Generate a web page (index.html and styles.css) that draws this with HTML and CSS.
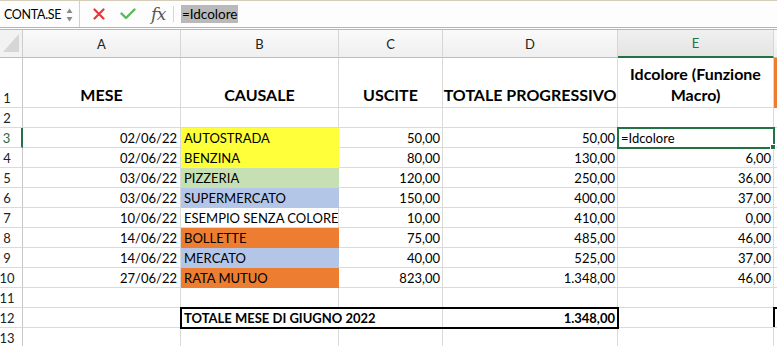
FILE: index.html
```html
<!DOCTYPE html>
<html lang="it">
  <head>
    <meta charset="UTF-8" />
    <title>Spese giugno 2022</title>
    <link rel="stylesheet" href="styles.css">
  </head>
  <body>
    <header class="formula-bar">
      <div class="name-box">
        <span>CONTA.SE</span>
        <svg class="spinner" width="7" height="16" viewBox="0 0 7 16">
          <path d="M3.5 1.5 L6.5 6 L0.5 6 Z" fill="#8a8a8a" />
          <path d="M3.5 14.5 L6.5 10 L0.5 10 Z" fill="#8a8a8a" />
        </svg>
      </div>
      <div class="tools">
        <svg class="icon-cancel" width="12" height="12" viewBox="0 0 12 12">
          <path d="M1.5 1.5 L10.5 10.5 M10.5 1.5 L1.5 10.5" stroke="#e2393d" stroke-width="2.2" stroke-linecap="round" />
        </svg>
        <svg class="icon-ok" width="16" height="12" viewBox="0 0 16 12">
          <path d="M1.5 5.5 L6 10 L14.5 1.5" fill="none" stroke="#5cb85c" stroke-width="2.4" stroke-linecap="round" stroke-linejoin="round" />
        </svg>
        <span class="fx">fx</span>
        <span class="divider"></span>
      </div>
      <div class="formula">
        <span class="formula-text">=Idcolore</span>
      </div>
    </header>

    <main class="sheet">
      <div class="corner"></div>
      <div class="ch">A</div>
      <div class="ch">B</div>
      <div class="ch">C</div>
      <div class="ch">D</div>
      <div class="ch active">E</div>
      <div class="ch"></div>

      <div class="cell rh">1</div>
      <div class="cell head">MESE</div>
      <div class="cell head">CAUSALE</div>
      <div class="cell head">USCITE</div>
      <div class="cell head">TOTALE PROGRESSIVO</div>
      <div class="cell head wrap">Idcolore (Funzione Macro)</div>
      <div class="cell fill-orange"></div>

      <div class="cell rh">2</div>
      <div class="cell"></div>
      <div class="cell"></div>
      <div class="cell"></div>
      <div class="cell"></div>
      <div class="cell"></div>
      <div class="cell"></div>

      <div class="cell rh current">3</div>
      <div class="cell num date">02/06/22</div>
      <div class="cell fill-yellow">AUTOSTRADA</div>
      <div class="cell num">50,00</div>
      <div class="cell num">50,00</div>
      <div class="cell selected">=Idcolore</div>
      <div class="cell"></div>

      <div class="cell rh">4</div>
      <div class="cell num date">02/06/22</div>
      <div class="cell fill-yellow">BENZINA</div>
      <div class="cell num">80,00</div>
      <div class="cell num">130,00</div>
      <div class="cell num">6,00</div>
      <div class="cell"></div>

      <div class="cell rh">5</div>
      <div class="cell num date">03/06/22</div>
      <div class="cell fill-green">PIZZERIA</div>
      <div class="cell num">120,00</div>
      <div class="cell num">250,00</div>
      <div class="cell num">36,00</div>
      <div class="cell"></div>

      <div class="cell rh">6</div>
      <div class="cell num date">03/06/22</div>
      <div class="cell fill-blue">SUPERMERCATO</div>
      <div class="cell num">150,00</div>
      <div class="cell num">400,00</div>
      <div class="cell num">37,00</div>
      <div class="cell"></div>

      <div class="cell rh">7</div>
      <div class="cell num date">10/06/22</div>
      <div class="cell">ESEMPIO SENZA COLORE</div>
      <div class="cell num">10,00</div>
      <div class="cell num">410,00</div>
      <div class="cell num">0,00</div>
      <div class="cell"></div>

      <div class="cell rh">8</div>
      <div class="cell num date">14/06/22</div>
      <div class="cell fill-orange">BOLLETTE</div>
      <div class="cell num">75,00</div>
      <div class="cell num">485,00</div>
      <div class="cell num">46,00</div>
      <div class="cell"></div>

      <div class="cell rh">9</div>
      <div class="cell num date">14/06/22</div>
      <div class="cell fill-blue">MERCATO</div>
      <div class="cell num">40,00</div>
      <div class="cell num">525,00</div>
      <div class="cell num">37,00</div>
      <div class="cell"></div>

      <div class="cell rh">10</div>
      <div class="cell num date">27/06/22</div>
      <div class="cell fill-orange">RATA MUTUO</div>
      <div class="cell num">823,00</div>
      <div class="cell num">1.348,00</div>
      <div class="cell num">46,00</div>
      <div class="cell"></div>

      <div class="cell rh">11</div>
      <div class="cell"></div>
      <div class="cell"></div>
      <div class="cell"></div>
      <div class="cell"></div>
      <div class="cell"></div>
      <div class="cell"></div>

      <div class="cell rh">12</div>
      <div class="cell"></div>
      <div class="total">
        <div class="cell total-label">TOTALE MESE DI GIUGNO 2022</div>
        <div class="cell num total-sum">1.348,00</div>
      </div>
      <div class="cell"></div>
      <div class="cell boxed"></div>

      <div class="cell rh">13</div>
      <div class="cell"></div>
      <div class="cell"></div>
      <div class="cell"></div>
      <div class="cell"></div>
      <div class="cell"></div>
      <div class="cell"></div>
    </main>
  </body>
</html>
```

FILE: styles.css
```css
*,
*::before,
*::after {
  box-sizing: border-box;
}

body {
  margin: 0;
  font-family: Lato, 'Open Sans', sans-serif;
  color: #000;
  background: #fff;
  overflow: hidden;
}

/* formula bar */
.formula-bar {
  display: flex;
  height: 28px;
  background: #fdfdfd;
  border-top: 1px solid #d4cdb9;
  border-bottom: 1px solid #b4b4b4;
}

.name-box {
  width: 80px;
  display: flex;
  align-items: center;
  justify-content: space-between;
  padding: 0 6px 0 4px;
  border-right: 1px solid #d0d0d0;
  font-size: 12.5px;
  letter-spacing: -0.3px;

  .spinner {
    margin-top: 1px;
  }
}

.tools {
  display: flex;
  align-items: center;
  padding-left: 13px;

  .icon-cancel {
    margin-right: 15px;
  }

  .icon-ok {
    margin-right: 15px;
  }

  .fx {
    font-family: 'DejaVu Serif', 'Liberation Serif', serif;
    font-style: italic;
    font-size: 17px;
    color: #555;
    letter-spacing: -0.5px;
  }

  .divider {
    width: 1px;
    height: 16px;
    background: #d6d6d6;
    margin-left: 7px;
  }
}

.formula {
  display: flex;
  align-items: center;
  padding-left: 7px;

  .formula-text {
    background: #b9b9b9;
    font-size: 13.5px;
    line-height: 18px;
    padding: 0 1px;
  }
}

/* grid */
.sheet {
  display: grid;
  grid-template-columns: 23px 158px 158px 104px 175px 156px 1fr;
  grid-template-rows: 28px 50px;
  grid-auto-rows: 20px;
  margin-top: 1px;
  border-top: 1px solid #b8b8b8;
  font-size: 13px;
}

.corner {
  position: relative;
  background: #f2f2f2;
  border-right: 1px solid #cdcdcd;
  border-bottom: 1px solid #bcbcbc;

  &::after {
    content: '';
    position: absolute;
    left: 3px;
    right: 3px;
    top: 4px;
    bottom: 5px;
    background: #d6d6d6;
    clip-path: polygon(100% 0, 100% 100%, 0 100%);
  }
}

.ch {
  display: flex;
  align-items: center;
  justify-content: center;
  background: linear-gradient(#fafafa, #efefef);
  border-right: 1px solid #d6d6d6;
  border-bottom: 1px solid #bcbcbc;
  color: #222;

  &.active {
    background: linear-gradient(#f0f0f0, #e4e4e4);
    color: #217346;
    border-bottom: 2px solid #217346;
  }
}

.cell {
  display: flex;
  align-items: flex-end;
  min-width: 0;
  padding: 0 3px 1px;
  line-height: 16px;
  white-space: nowrap;
  overflow: hidden;
  border-right: 1px solid #dadada;
  border-bottom: 1px solid #dadada;
}

.rh {
  justify-content: center;
  padding: 0 8px 1px 0;
  color: #222;
  border-right-color: #c8c8c8;

  &.current {
    color: #2b6b45;
    border-right: 2px solid #217346;
  }
}

.num {
  justify-content: flex-end;
  padding-right: 2px;
}

.date {
  padding-right: 3px;
}

.head {
  justify-content: center;
  font-size: 16px;
  font-weight: 700;
  line-height: 21px;
  padding-bottom: 2px;

  &.wrap {
    white-space: normal;
    text-align: center;
  }
}

.fill-yellow {
  background: #ffff3a;
  border-color: #ffff3a;
}

.fill-green {
  background: #c6e0b4;
  border-color: #c6e0b4;
}

.fill-blue {
  background: #b4c6e7;
  border-color: #b4c6e7;
}

.fill-orange {
  background: #ed7d31;
  border-color: #ed7d31;
}

.selected {
  position: relative;
  z-index: 1;
  overflow: visible;
  outline: 2px solid #217346;
  outline-offset: -1px;

  &::after {
    content: '';
    position: absolute;
    right: -3px;
    bottom: -3px;
    width: 6px;
    height: 6px;
    background: #217346;
    border: 1px solid #fff;
  }
}

.total {
  grid-column: 3 / 6;
  display: grid;
  grid-template-columns: 262px 1fr;
  position: relative;
  z-index: 1;
  outline: 2px solid #000;
  outline-offset: -1px;
  font-weight: 700;
}

.boxed {
  box-shadow: -1px -1px 0 #000, inset 1px 1px 0 #000;
}
```
